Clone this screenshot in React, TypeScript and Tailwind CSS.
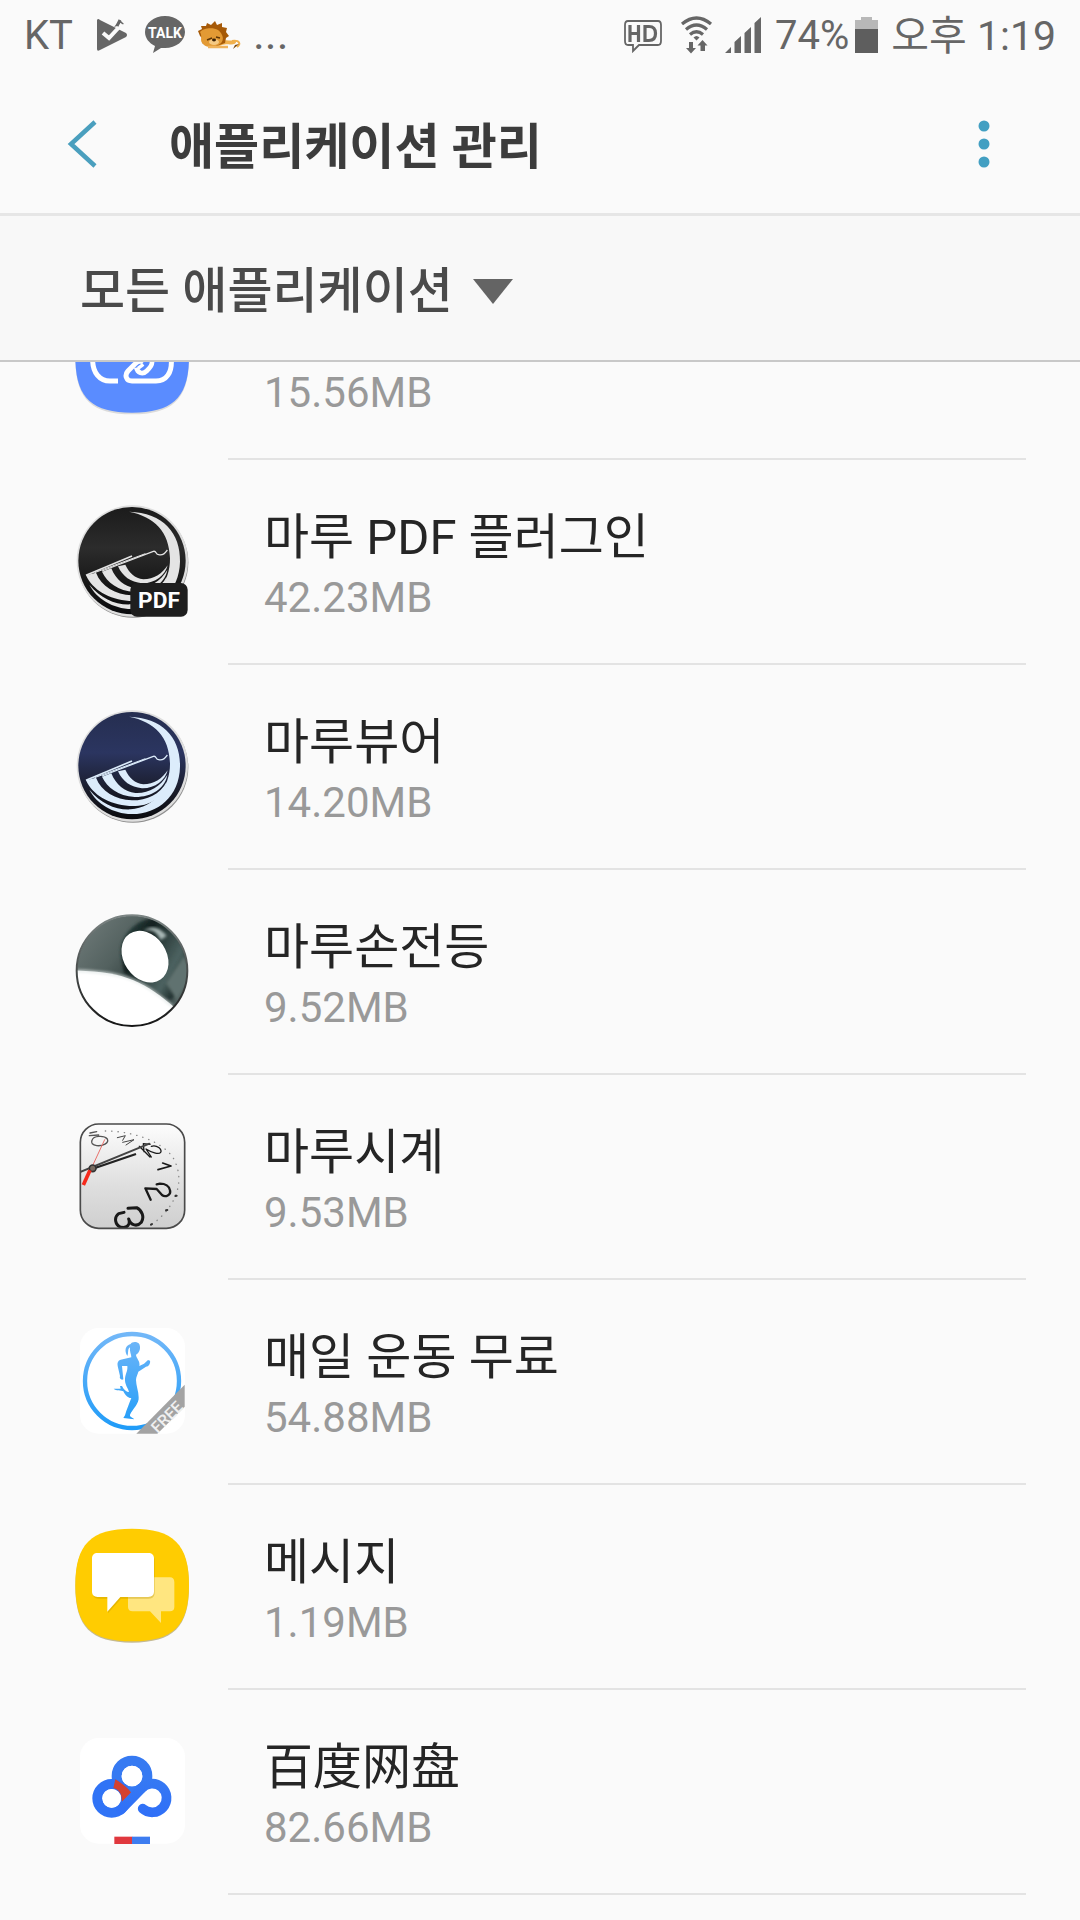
import React from "react";

const FONT = "font-['Roboto','Noto_Sans_CJK_KR',sans-serif]";
const SQUIRCLE =
  "M216 41 C340 41 387 88 387 210 C387 332 340 379 216 379 C92 379 46 332 46 210 C46 88 92 41 216 41 Z";

function Frame({ children }: { children: React.ReactNode }) {
  return (
    <svg viewBox="0 0 420 420" className="h-[140px] w-[140px] shrink-0" aria-hidden="true">
      {children}
    </svg>
  );
}

function LinkIcon() {
  return (
    <svg viewBox="0 231 420 189" className="h-[63px] w-[140px] shrink-0" aria-hidden="true">
      <path d={SQUIRCLE} transform="translate(0 9)" fill="#000" opacity=".12" />
      <path d={SQUIRCLE} transform="translate(0 4)" fill="#5a8cff" />
      <g fill="none" stroke="#fff" strokeWidth="15">
        <path d="M98 225 C98 262 118 288 150 288 H174" />
        <path d="M334 225 C336 262 320 288 288 288 H216 C198 288 193 270 204 258 L226 236 C232 229 244 226 250 232" />
        <path d="M276 225 C278 240 270 248 260 258 C248 270 232 264 229 248" strokeWidth="14" />
        <path d="M234 250 L250 238" strokeWidth="10" />
      </g>
    </svg>
  );
}

function MaruArt({ id, top, mid, bottom, wave }: { id: string; top: string; mid: string; bottom: string; wave: string }) {
  return (
    <>
      <defs>
        <linearGradient id={id} x1="0" y1="0" x2="0" y2="1">
          <stop offset="0" stopColor={top} />
          <stop offset=".38" stopColor={mid} />
          <stop offset=".75" stopColor={bottom} />
          <stop offset="1" stopColor="#0a0b0e" />
        </linearGradient>
      </defs>
      <circle cx="219" cy="217" r="166" fill="#6a6a6a" opacity=".75" />
      <circle cx="217" cy="213" r="167" fill="#dedede" />
      <circle cx="216" cy="212" r="161" fill={`url(#${id})`} />
      <g fill={wave}>
        <path d="M207 65 C310 68 362 130 360 215 C358 305 292 358 215 357 C158 356 110 326 88 284 C124 326 164 345 212 343 C284 338 331 276 330 205 C328 125 284 80 207 65 Z" />
        <path d="M78 256 L108 248 C124 290 166 313 216 316 C262 316 300 298 320 260 C310 312 264 336 208 333 C146 328 98 300 78 256 Z" />
        <path d="M126 245 L154 235 C168 270 194 290 226 294 C266 296 300 276 322 240 C314 282 272 307 224 306 C174 302 142 278 126 245 Z" />
        <path d="M174 229 L196 224 C208 250 224 264 250 268 C282 268 306 252 323 226 C316 256 284 281 246 280 C212 276 188 260 174 229 Z" />
      </g>
      <g fill="none" stroke={wave}>
        <path d="M78 256 L216 198" strokeWidth="5" />
        <path d="M104 248 L256 191" strokeWidth="3" />
        <path d="M126 243 L280 184 C290 181 286 194 296 194 C310 197 316 188 322 180" strokeWidth="4" />
      </g>
    </>
  );
}

function MaruPdfIcon() {
  return (
    <Frame>
      <MaruArt id="maru-pdf" top="#1b1b1b" mid="#2c2c2c" bottom="#151515" wave="#e4e4e4" />
      <rect x="211" y="279" width="172" height="101" rx="20" fill="#1e1e1e" />
      <text x="297" y="354" textAnchor="middle" fontSize="68" fontWeight="700" fill="#fff" fontFamily="Roboto, sans-serif">
        PDF
      </text>
    </Frame>
  );
}

function MaruViewerIcon() {
  return (
    <Frame>
      <MaruArt id="maru-viewer" top="#252e50" mid="#2b3560" bottom="#191b28" wave="#dcecfb" />
    </Frame>
  );
}

function FlashlightIcon() {
  return (
    <Frame>
      <defs>
        <linearGradient id="torch-body" x1="0" y1="0" x2="1" y2=".8">
          <stop offset="0" stopColor="#75807f" />
          <stop offset=".4" stopColor="#53615f" />
          <stop offset=".75" stopColor="#1d2b2a" />
          <stop offset="1" stopColor="#6c7d7b" />
        </linearGradient>
        <linearGradient id="torch-head" x1="0" y1="0" x2="1" y2=".7">
          <stop offset="0" stopColor="#35504d" />
          <stop offset=".35" stopColor="#142120" />
          <stop offset=".8" stopColor="#4d6361" />
          <stop offset="1" stopColor="#172524" />
        </linearGradient>
        <linearGradient id="torch-rim" x1="0" y1="0" x2="0" y2="1">
          <stop offset="0" stopColor="#7c8584" />
          <stop offset="1" stopColor="#151515" />
        </linearGradient>
        <clipPath id="torch-clip">
          <circle cx="216" cy="212" r="165" />
        </clipPath>
        <filter id="torch-soft">
          <feGaussianBlur stdDeviation="5" />
        </filter>
      </defs>
      <g clipPath="url(#torch-clip)">
        <rect x="40" y="40" width="350" height="350" fill="url(#torch-body)" />
        <path d="M182 150 C188 100 230 56 286 54 C360 86 400 180 376 260 L330 300 C290 270 220 250 190 215 Z" fill="url(#torch-head)" filter="url(#torch-soft)" />
        <path d="M372 168 L318 250 L350 300 L400 230 Z" fill="#61726f" filter="url(#torch-soft)" />
        <path d="M250 94 C276 84 292 98 302 120 L320 108 C306 88 276 70 250 94 Z" fill="#a9b8b6" filter="url(#torch-soft)" />
        <path d="M30 211 C190 214 250 240 350 328 L300 420 H30 Z" fill="#fff" />
        <path d="M50 212 C190 216 250 240 336 318" fill="none" stroke="#dfe6e5" strokeWidth="6" filter="url(#torch-soft)" />
        <ellipse cx="255" cy="170" rx="64" ry="83" transform="rotate(-34 255 170)" fill="#fff" />
      </g>
      <circle cx="216" cy="212" r="166" fill="none" stroke="url(#torch-rim)" strokeWidth="6" />
    </Frame>
  );
}

function ClockIcon() {
  return (
    <Frame>
      <defs>
        <linearGradient id="clock-face" x1="0" y1="0" x2="0" y2="1">
          <stop offset="0" stopColor="#fdfdfd" />
          <stop offset=".6" stopColor="#dedede" />
          <stop offset="1" stopColor="#cfcfcf" />
        </linearGradient>
        <clipPath id="clock-clip">
          <rect x="62" y="57" width="311" height="312" rx="54" />
        </clipPath>
      </defs>
      <rect x="61" y="57" width="313" height="313" rx="55" fill="url(#clock-face)" />
      <g clipPath="url(#clock-clip)" fill="none" stroke="#191919" strokeLinecap="round" strokeLinejoin="round">
        <path d="M192 322 L176 326 C160 338 166 362 184 367 C202 370 212 358 206 342 C212 362 232 366 244 352 C254 336 246 316 230 308 L204 310" strokeWidth="9" />
        <path d="M272 284 L256 250 L290 252 L306 270 C316 278 334 270 330 256 C328 244 316 236 300 236 L290 238" strokeWidth="7" />
        <path d="M294 194 L333 183 L308 174" strokeWidth="5" />
        <path d="M238 124 L270 156 M252 140 L250 116 L270 118 M274 124 C290 118 308 134 302 142 C296 150 274 142 258 132 L274 156" strokeWidth="4" />
        <path d="M172 98 L196 92 L188 106 M188 112 L222 104 L198 120" stroke="#444" strokeWidth="3" />
        <path d="M88 92 L116 90 M90 84 L110 80 M96 106 C100 92 132 90 142 102 C148 114 128 124 110 122 C98 120 92 114 96 106 Z" stroke="#555" strokeWidth="4" />
        <path d="M96 186 L134 104" stroke="#e8706a" strokeWidth="3" />
        <path d="M60 201 L268 116" stroke="#444" strokeWidth="6" />
        <path d="M96 192 L228 147" stroke="#222" strokeWidth="7" strokeLinecap="butt" />
        <circle cx="98" cy="190" r="10" fill="#786a60" stroke="#333" strokeWidth="5" />
        <path d="M90 196 L70 240" stroke="#f52a1c" strokeWidth="11" strokeLinecap="butt" />
        <path d="M136 78 C210 78 300 104 338 156 C376 220 356 300 274 360" stroke="#888" strokeWidth="4" strokeDasharray="1 18" />
        <path d="M346 273 L350 272 M318 316 L322 315 M273 359 L276 357" stroke="#333" strokeWidth="6" />
      </g>
      <rect x="61" y="57" width="313" height="313" rx="55" fill="none" stroke="#4a4a4a" strokeWidth="5" />
    </Frame>
  );
}

function WorkoutIcon() {
  return (
    <Frame>
      <defs>
        <linearGradient id="run-blue" x1="0" y1="66" x2="0" y2="360" gradientUnits="userSpaceOnUse">
          <stop offset="0" stopColor="#74b8f8" />
          <stop offset="1" stopColor="#1e9bf8" />
        </linearGradient>
      </defs>
      <rect x="60" y="54" width="315" height="317" rx="56" fill="#fff" />
      <circle cx="216" cy="213" r="141" fill="none" stroke="url(#run-blue)" strokeWidth="13" />
      <path
        d="M212 102 C196 106 192 122 202 138 C206 130 202 116 210 112 C208 124 214 134 214 142 L182 149 C174 151 171 158 173 168 L180 198 C177 206 184 211 190 208 L186 168 L202 168 C204 184 194 194 195 212 C196 226 206 238 207 246 C200 246 192 240 186 228 L180 228 L182 236 L161 236 C168 243 184 240 190 244 C196 258 208 266 214 264 C208 280 200 298 195 316 L190 324 L223 328 C219 322 208 322 210 314 C218 298 238 280 236 262 C236 244 228 226 228 210 C228 200 234 192 235 185 L258 170 C266 170 272 160 270 152 L264 150 L252 161 L238 168 C242 154 228 144 228 134 C240 128 244 110 236 100 C228 94 216 95 212 102 Z"
        fill="url(#run-blue)"
      />
      <path d="M374 224 V290 L292 371 H229 Z" fill="#a3a3a3" />
      <text x="320" y="338" transform="rotate(-45 320 320)" textAnchor="middle" fontSize="48" fontWeight="500" fill="#f0f0f0" fontFamily="Roboto, sans-serif">
        FREE
      </text>
    </Frame>
  );
}

function MessageIcon() {
  return (
    <Frame>
      <path d={SQUIRCLE} transform="translate(0 4)" fill="#8f7a28" opacity=".5" />
      <path d={SQUIRCLE} fill="#ffcc01" />
      <path d="M218 187 H330 C338 187 343 192 343 201 V276 C343 285 338 289 330 289 H303 V324 L270 289 H218 C209 289 204 284 204 276 V201 Z" fill="#ffe680" />
      <path d="M113 116 H264 C276 116 282 122 282 133 V229 C282 241 276 248 264 248 H181 L142 292 V248 H113 C102 248 96 241 96 229 V133 C96 122 102 116 113 116 Z" fill="#b88e00" opacity=".35" transform="translate(2 3)" />
      <path d="M113 114 H264 C276 114 282 120 282 131 V229 C282 240 276 246 264 246 H181 L142 290 V246 H113 C102 246 96 240 96 229 V131 C96 120 102 114 113 114 Z" fill="#fff" />
    </Frame>
  );
}

function BaiduIcon() {
  return (
    <Frame>
      <defs>
        <linearGradient id="baidu-blue" x1="0" y1="100" x2="0" y2="300" gradientUnits="userSpaceOnUse">
          <stop offset="0" stopColor="#3a80f0" />
          <stop offset="1" stopColor="#2e6ef8" />
        </linearGradient>
      </defs>
      <rect x="60" y="54" width="315" height="317" rx="56" fill="#fff" />
      <circle cx="216" cy="168" r="46" fill="none" stroke="#367af2" strokeWidth="30" />
      <circle cx="155" cy="235" r="43" fill="none" stroke="#3073f6" strokeWidth="30" />
      <path d="M166 178 C186 190 206 206 214 219 L186 246 C186 220 176 208 160 204 Z" fill="#d3412f" />
      <path d="M182 270 L244 206 A43 43 0 1 1 248 266" fill="none" stroke="url(#baidu-blue)" strokeWidth="29" strokeLinecap="round" />
      <circle cx="216" cy="168" r="31" fill="#fff" />
      <circle cx="155" cy="235" r="28" fill="#fff" />
      <rect x="163" y="350" width="54" height="22" fill="#e0383e" />
      <rect x="216" y="350" width="54" height="22" fill="#3d7cf0" />
    </Frame>
  );
}

function StatusBar() {
  return (
    <div className={`flex h-[72px] items-start justify-between pl-6 pr-6 text-[#666] ${FONT}`}>
      <div className="flex items-start">
        <span className="w-[69px] pt-[6px] text-[40px] leading-[60px]">KT</span>
        <svg width="152" height="60" viewBox="93 0 152 60" aria-hidden="true">
          <path d="M97 20 Q98 18 100 20 L126 33 Q128 35 126 37 L100 50 Q97 52 97 49 Z" fill="#666" />
          <path d="M114 27 L120 20 L124 24 Z" fill="#666" />
          <path d="M103 33 L109 38 L122 24" fill="none" stroke="#fafafa" strokeWidth="4" />
          <path d="M117 26 L120 20" stroke="#666" strokeWidth="3" />
          <path d="M165 16 C176 16 185 23 185 32 C185 41 176 48 165 48 L161 48 L153 53 L155 46 C149 43 145 38 145 32 C145 23 154 16 165 16 Z" fill="#666" />
          <text x="165" y="38" textAnchor="middle" fontSize="14" fontWeight="700" fill="#fff" fontFamily="Roboto, sans-serif">TALK</text>
          <path d="M219 44 C226 40 230 44 234 42" fill="none" stroke="#f0b04c" strokeWidth="4" strokeLinecap="round" />
          <path d="M232 41 C240 40 241 44 237 47" fill="none" stroke="#f0b04c" strokeWidth="2" />
          <path d="M233 49 L235 45 L239 44 Z" fill="#7a4508" />
          <path d="M198 31 L202 29 L201 26 L206 26 L207 23 L211 25 L215 21 L217 25 L222 23 L222 27 L227 28 L226 32 L229 36 L226 38 L225 43 L217 46 L207 46 L202 43 L203 39 L200 36 Z" fill="#a65a08" />
          <path d="M200 32 C203 28 213 27 218 30 C223 34 225 40 220 44 C214 48 206 48 203 44 C199 40 203 37 200 32 Z" fill="#e39a34" />
          <path d="M207 40 L212 38 M216 37 L220 38" stroke="#5f3607" strokeWidth="1.4" />
          <ellipse cx="214" cy="42" rx="5" ry="3" fill="#f5c982" />
          <ellipse cx="214" cy="40" rx="2" ry="1.4" fill="#3a2106" />
          <path d="M208 47 L228 47" stroke="#efb35b" strokeWidth="2.5" />
        </svg>
        <span className="pl-2 pt-1 text-[45px] leading-[60px]">...</span>
      </div>
      <div className="flex items-start">
        <svg width="144" height="60" viewBox="617 0 144 60" aria-hidden="true">
          <path d="M624 21 H654 Q657 21 657 25 V41 Q657 45 654 45 H635 L629 51 V45 H624 Q621 45 621 41 V25 Q621 21 624 21 Z" fill="none" stroke="#666" strokeWidth="1.8" />
          <g fill="none" stroke="#666" strokeWidth="3.2">
            <path d="M626 25 V42 M634.500 25 V42 M626 33.500 H634.500" />
            <path d="M641 26.500 V40.500 H645 Q651.500 40.500 651.500 33.500 Q651.500 26.500 645 26.500 Z" />
            <path d="M678 24 Q692.500 12 707 24" />
            <path d="M682 29.500 Q692.500 20.500 703 29.500" />
            <path d="M686 34.500 Q692.500 29 699 34.500" />
          </g>
          <path d="M689.500 37.500 Q692.500 34.500 695.500 37.500 L692.500 40.500 Z" fill="#666" />
          <path d="M685 42 H689 V48 H692 L687 53.500 L682 48 H685 Z M696.500 51 H701 V45.500 H703.500 L698.500 40 L693.500 45.500 H696.500 Z" fill="#666" />
          <path d="M721 53 L727 47 V53 Z M730.500 53 V42 L737 36 V53 Z M740.500 53 V33 L747 27 V53 Z M750.500 53 V23 L757 17 V53 Z" fill="#666" />
        </svg>
        <span className="pl-[10px] pt-[6px] text-[40px] leading-[60px]">74%</span>
        <svg width="34" height="60" viewBox="847 0 34 60" aria-hidden="true">
          <path d="M859 17 H870 V20 H876 V30 H853 V20 H859 Z" fill="#b8b8b8" />
          <path d="M853 29 H876 V53 H853 Z" fill="#5e5e5e" />
        </svg>
        <span className="pl-2 pt-[6px] text-[41px] leading-[60px]">오후 1:19</span>
      </div>
    </div>
  );
}

const apps = [
  { name: "마루 PDF 플러그인", size: "42.23MB", Icon: MaruPdfIcon },
  { name: "마루뷰어", size: "14.20MB", Icon: MaruViewerIcon },
  { name: "마루손전등", size: "9.52MB", Icon: FlashlightIcon },
  { name: "마루시계", size: "9.53MB", Icon: ClockIcon },
  { name: "매일 운동 무료", size: "54.88MB", Icon: WorkoutIcon },
  { name: "메시지", size: "1.19MB", Icon: MessageIcon },
  { name: "百度网盘", size: "82.66MB", Icon: BaiduIcon },
];

export default function App() {
  return (
    <div className={`flex min-h-screen flex-col bg-[#fafafa] ${FONT}`}>
      <StatusBar />
      <header className="flex h-[144px] items-center border-b-[3px] border-[#e6e6e6] pl-[62px] pr-[76px] pt-[2px]">
        <button aria-label="뒤로" className="h-12 w-10">
          <svg width="40" height="48" viewBox="0 0 40 48" aria-hidden="true">
            <path d="M33 2 L9 24 L33 46" fill="none" stroke="#4a9fbe" strokeWidth="4.500" />
          </svg>
        </button>
        <h1 className="flex-1 pl-[67px] pt-2 text-[49px] leading-[72px] font-bold text-[#3c3c3c]">애플리케이션 관리</h1>
        <button aria-label="옵션 더보기" className="h-12 w-10">
          <svg width="40" height="48" viewBox="0 0 40 48" aria-hidden="true" fill="#429fc2">
            <circle cx="20" cy="6" r="5.500" />
            <circle cx="20" cy="24" r="5.500" />
            <circle cx="20" cy="42" r="5.500" />
          </svg>
        </button>
      </header>
      <div className="flex h-[146px] items-center border-b-2 border-[#c8c8c8] bg-[#f8f8f8] pl-20 pt-2">
        <select
          aria-label="애플리케이션 필터"
          className="h-20 appearance-none bg-transparent text-[49px] leading-[72px] font-medium text-[#4a4a4a]"
        >
          <option>모든 애플리케이션</option>
        </select>
        <svg width="40" height="26" viewBox="0 0 40 26" className="pointer-events-none ml-5" aria-hidden="true">
          <path d="M0 0 H40 L20 25 Z" fill="#646464" />
        </svg>
      </div>
      <ul className="flex-1">
        <li>
          <button className="flex h-[98px] w-full items-start pl-[60px] text-left">
            <LinkIcon />
            <span className="ml-7 mr-[54px] h-full flex-1 border-b-2 border-[#e3e3e3] pl-9 pt-[6px]">
              <span className="block text-[42px] leading-[50px] text-[#999]">15.56MB</span>
            </span>
          </button>
        </li>
        {apps.map(({ name, size, Icon }) => (
          <li key={name}>
            <button className="flex h-[205px] w-full items-start pl-[60px] text-left">
              <span className="pt-[30px]">
                <Icon />
              </span>
              <span className="ml-7 mr-[54px] h-full flex-1 border-b-2 border-[#e3e3e3] pl-9 pt-[42px]">
                <span className="block text-[49px] leading-[71px] text-[#252525]">{name}</span>
                <span className="block text-[42px] leading-[50px] text-[#999]">{size}</span>
              </span>
            </button>
          </li>
        ))}
      </ul>
    </div>
  );
}
